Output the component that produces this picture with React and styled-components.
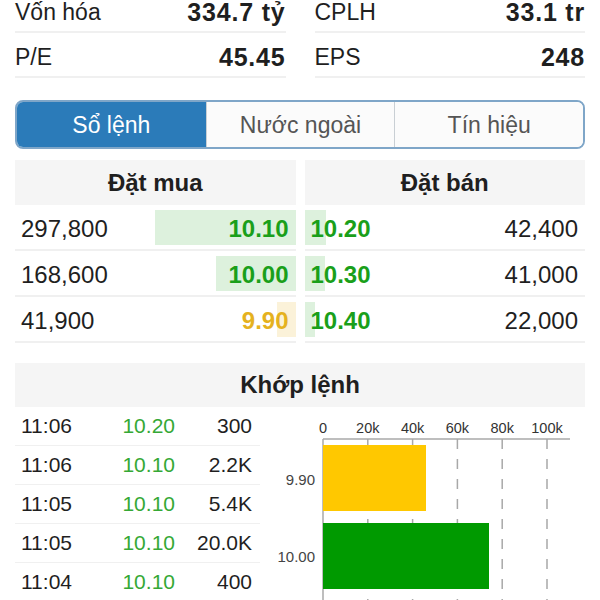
import React from 'react';
import styled, { createGlobalStyle } from 'styled-components';

const COLORS = {
  text: '#1f1f1f',
  muted: '#555',
  line: '#f0f0f0',
  headerBg: '#f5f5f5',
  blue: '#2b7bb9',
  green: '#1a9f1a',
  tradeGreen: '#35a835',
  yellow: '#e5b21f',
  greenBar: '#ddf1dd',
  yellowBar: '#fbf2d9',
};

const GlobalStyle = createGlobalStyle`
  html, body {
    margin: 0;
    padding: 0;
    background: #fff;
    overflow: hidden;
  }
  body {
    font-family: "Liberation Sans", Arial, sans-serif;
    color: ${COLORS.text};
  }
`;

const Page = styled.div`
  width: 570px;
  padding: 0 15px;
  margin-top: -12px;
`;

const StatsGrid = styled.div`
  display: grid;
  grid-template-columns: 1fr 1fr;
  column-gap: 29px;
`;

const StatRow = styled.div`
  height: 45px;
  display: flex;
  align-items: center;
  justify-content: space-between;
  padding-top: 5px;
  border-bottom: 2px solid ${COLORS.line};
  box-sizing: border-box;
`;

const StatLabel = styled.span`
  font-size: 23px;
`;

const StatValue = styled.span`
  font-size: 25px;
  font-weight: 700;
  letter-spacing: 0.8px;
`;

const Tabs = styled.div`
  margin-top: 22px;
  height: 49px;
  display: grid;
  grid-template-columns: repeat(3, 1fr);
  border: 2px solid #7fa6c8;
  border-radius: 8px;
  overflow: hidden;
  box-sizing: border-box;
`;

const Tab = styled.div`
  display: flex;
  align-items: center;
  justify-content: center;
  padding-top: 2px;
  font-size: 23px;
  background: ${(p) => (p.$active ? COLORS.blue : '#fbfbfb')};
  color: ${(p) => (p.$active ? '#fff' : COLORS.muted)};
  border-left: ${(p) => (p.$first ? 'none' : '1px solid #c9cfd4')};
`;

const OrderBook = styled.div`
  margin-top: 11px;
  display: grid;
  grid-template-columns: 1fr 1fr;
  column-gap: 9px;
`;

const SectionHeader = styled.div`
  height: ${(p) => p.$height || 45}px;
  display: flex;
  align-items: center;
  justify-content: center;
  background: ${COLORS.headerBg};
  font-size: 24px;
  font-weight: 700;
`;

const BookRow = styled.div`
  position: relative;
  height: 46px;
  box-sizing: border-box;
  display: flex;
  align-items: center;
  justify-content: space-between;
  padding: 3px 7px 0 6px;
  border-bottom: 2px solid ${COLORS.line};
  font-size: 24px;
`;

const Bar = styled.div`
  position: absolute;
  top: 5px;
  bottom: 4px;
  ${(p) => (p.$side === 'bid' ? 'right: 0;' : 'left: 0;')}
  background: ${(p) => p.$bg};
`;

const Qty = styled.span`
  position: relative;
`;

const Price = styled.span`
  position: relative;
  font-weight: 700;
  color: ${(p) => p.$color};
`;

const MatchHeader = styled(SectionHeader)`
  margin-top: 20px;
`;

const MatchBody = styled.div`
  display: flex;
  align-items: flex-start;
`;

const TradeTable = styled.div`
  width: 245px;
  flex-shrink: 0;
`;

const TradeRow = styled.div`
  height: 39px;
  display: grid;
  grid-template-columns: 74px 80px 1fr;
  align-items: center;
  padding: 0 8px 0 6px;
  border-bottom: 1.5px solid ${COLORS.line};
  font-size: 21px;
  box-sizing: border-box;
`;

const TradeCell = styled.span`
  text-align: ${(p) => p.$align || 'left'};
  color: ${(p) => p.$color || COLORS.text};
`;

const ChartBox = styled.div`
  flex: 1;
  height: 193px;
`;

const stats = [
  ['Vốn hóa', '334.7 tỷ'],
  ['CPLH', '33.1 tr'],
  ['P/E', '45.45'],
  ['EPS', '248'],
];

const bids = [
  { qty: '297,800', price: '10.10', bar: 50, color: COLORS.green, bg: COLORS.greenBar },
  { qty: '168,600', price: '10.00', bar: 28.5, color: COLORS.green, bg: COLORS.greenBar },
  { qty: '41,900', price: '9.90', bar: 6.5, color: COLORS.yellow, bg: COLORS.yellowBar },
];

const asks = [
  { qty: '42,400', price: '10.20', bar: 7.5 },
  { qty: '41,000', price: '10.30', bar: 7.2 },
  { qty: '22,000', price: '10.40', bar: 3.6 },
];

const trades = [
  ['11:06', '10.20', '300'],
  ['11:06', '10.10', '2.2K'],
  ['11:05', '10.10', '5.4K'],
  ['11:05', '10.10', '20.0K'],
  ['11:04', '10.10', '400'],
];

const ticks = [0, 20, 40, 60, 80, 100];
const X0 = 63;
const SCALE = 2.24;
const FONT = 'Liberation Sans, Arial, sans-serif';

const VolumeChart = () => (
  <svg width="325" height="193" viewBox="0 0 325 193">
    {ticks.map((t) => (
      <text key={t} x={X0 + t * SCALE} y={26} textAnchor="middle" fontSize="14.5" fill="#333" fontFamily={FONT}>
        {t === 0 ? '0' : `${t}k`}
      </text>
    ))}
    <line x1={X0} y1={32} x2={310} y2={32} stroke="#a8a8a8" strokeWidth="1.5" />
    <line x1={X0} y1={32} x2={X0} y2={193} stroke="#a8a8a8" strokeWidth="1.5" />
    {ticks.slice(1).map((t) => (
      <line
        key={t}
        x1={X0 + t * SCALE}
        y1={32}
        x2={X0 + t * SCALE}
        y2={193}
        stroke="#a8a8a8"
        strokeWidth="1.5"
        strokeDasharray="10 10"
      />
    ))}
    <rect x={X0} y={38} width={103} height={66} fill="#ffc800" />
    <rect x={X0} y={116} width={166} height={66} fill="#009a00" />
    <text x={55} y={78} textAnchor="end" fontSize="15" fill="#444" fontFamily={FONT}>
      9.90
    </text>
    <text x={55} y={155} textAnchor="end" fontSize="15" fill="#444" fontFamily={FONT}>
      10.00
    </text>
  </svg>
);

const App = () => (
  <>
    <GlobalStyle />
    <Page>
      <StatsGrid>
        {stats.map(([label, value]) => (
          <StatRow key={label}>
            <StatLabel>{label}</StatLabel>
            <StatValue>{value}</StatValue>
          </StatRow>
        ))}
      </StatsGrid>

      <Tabs>
        <Tab $active $first>Sổ lệnh</Tab>
        <Tab>Nước ngoài</Tab>
        <Tab>Tín hiệu</Tab>
      </Tabs>

      <OrderBook>
        <div>
          <SectionHeader>Đặt mua</SectionHeader>
          {bids.map((b) => (
            <BookRow key={b.price}>
              <Bar $side="bid" $bg={b.bg} style={{ width: `${b.bar}%` }} />
              <Qty>{b.qty}</Qty>
              <Price $color={b.color}>{b.price}</Price>
            </BookRow>
          ))}
        </div>
        <div>
          <SectionHeader>Đặt bán</SectionHeader>
          {asks.map((a) => (
            <BookRow key={a.price}>
              <Bar $side="ask" $bg={COLORS.greenBar} style={{ width: `${a.bar}%` }} />
              <Price $color={COLORS.green}>{a.price}</Price>
              <Qty>{a.qty}</Qty>
            </BookRow>
          ))}
        </div>
      </OrderBook>

      <MatchHeader $height={44}>Khớp lệnh</MatchHeader>
      <MatchBody>
        <TradeTable>
          {trades.map(([time, price, vol], i) => (
            <TradeRow key={i}>
              <TradeCell>{time}</TradeCell>
              <TradeCell $align="right" $color={COLORS.tradeGreen}>{price}</TradeCell>
              <TradeCell $align="right">{vol}</TradeCell>
            </TradeRow>
          ))}
        </TradeTable>
        <ChartBox>
          <VolumeChart />
        </ChartBox>
      </MatchBody>
    </Page>
  </>
);

export default App;
